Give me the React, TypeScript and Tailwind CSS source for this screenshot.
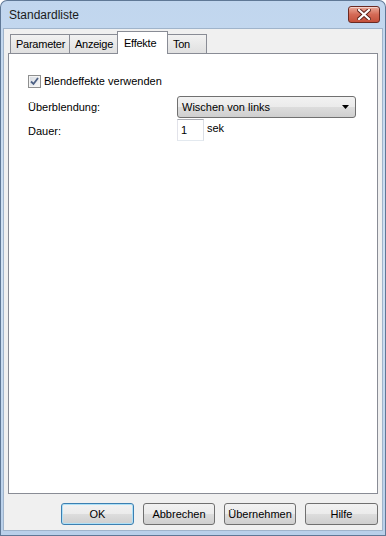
import React from "react";

const tabs = [
  { label: "Parameter", w: "w-[60px]" },
  { label: "Anzeige", w: "w-[49px]" },
  { label: "Effekte", w: "w-[51px]", active: true },
  { label: "Ton", w: "w-[40px]" },
];
const buttons = [
  { label: "OK", primary: true, w: "w-[73px]" },
  { label: "Abbrechen", w: "w-[72px]" },
  { label: "Übernehmen", w: "w-[72px]" },
  { label: "Hilfe", w: "w-[73px]" },
];

function CloseButton() {
  return (
    <div className="w-[32px] h-[17px] rounded-[3px] border border-[#6b2a22] bg-gradient-to-b from-[#e9a999] via-[#d46a56] to-[#c4503b] flex items-center justify-center shadow-[inset_0_1px_0_rgba(255,255,255,0.5)]">
      <svg width="14" height="11" viewBox="0 0 14 11">
        <path d="M2 1 L12 10 M12 1 L2 10" stroke="#5a1f18" strokeWidth="4" strokeLinecap="square" />
        <path d="M2 1 L12 10 M12 1 L2 10" stroke="#ffffff" strokeWidth="2.2" strokeLinecap="square" />
      </svg>
    </div>
  );
}

function Checkbox() {
  return (
    <div className="w-[13px] h-[13px] border border-[#8e8f8f] bg-[#f4f4f4] p-px">
      <div className="w-full h-full bg-gradient-to-br from-[#d9dde3] to-[#f6f6f6] flex items-center justify-center">
        <svg width="9" height="9" viewBox="0 0 9 9">
          <path d="M1 4.5 L3.5 7 L8 1" stroke="#4d6185" strokeWidth="1.8" fill="none" />
        </svg>
      </div>
    </div>
  );
}

export default function App() {
  return (
    <div className="w-[386px] h-[536px] rounded-t-[7px] bg-[#5f7896] p-px font-['Liberation_Sans',Arial,sans-serif] text-[11px] text-black">
      <div className="h-full rounded-t-[6px] bg-gradient-to-b from-[#c1d6ee] via-[#d0e1f3] to-[#b9d0ea] flex flex-col px-[2px] pb-[4px]">
        {/* Title bar */}
        <div className="h-[27px] flex items-center justify-between pl-[6px] pr-[3px]">
          <span className="text-[12px] text-[#1b1b1b]">Standardliste</span>
          <CloseButton />
        </div>

        {/* Client area */}
        <div className="flex-1 bg-[#f0f0f0] border border-[#a0b4cb] flex flex-col px-[4px] pb-[5px]">
          {/* Tabs */}
          <div className="flex items-end h-[24px] pl-[2px] tracking-[-0.25px]">
            {tabs.map((t) =>
              t.active ? (
                <div
                  key={t.label}
                  className={`${t.w} relative z-10 -mb-px h-[23px] pl-[6px] bg-white border border-b-0 border-[#898c95] flex items-start pt-[3px] -ml-px`}
                >
                  {t.label}
                </div>
              ) : (
                <div
                  key={t.label}
                  className={`${t.w} h-[19px] pl-[5px] bg-gradient-to-b from-[#f2f2f2] to-[#e0e0e0] border border-b-0 border-[#898c95] flex items-center -ml-px first:ml-0`}
                >
                  {t.label}
                </div>
              )
            )}
          </div>

          {/* Panel */}
          <div className="flex-1 bg-white border border-[#898c95] pl-[19px] pt-[21px]">
            <div className="flex items-center gap-[3px] h-[13px]">
              <Checkbox />
              <span>Blendeffekte verwenden</span>
            </div>

            <div className="flex mt-[8px]">
              <div className="w-[149px] pt-[3px]">Überblendung:</div>
              <div className="w-[179px] h-[22px] rounded-[3px] border border-[#707070] bg-[linear-gradient(#f2f2f2_0%,#ebebeb_50%,#dddddd_50%,#cfcfcf_100%)] flex items-center justify-between pl-[4px] pr-[6px]">
                <span>Wischen von links</span>
                <svg width="7" height="4" viewBox="0 0 7 4">
                  <path d="M0 0 H7 L3.5 4 Z" fill="#000" />
                </svg>
              </div>
            </div>

            <div className="flex mt-[1px]">
              <div className="w-[149px] pt-[4px]">Dauer:</div>
              <div className="w-[27px] h-[22px] border border-[#abadb3] border-l-[#e2e3ea] border-r-[#dbdfe6] border-b-[#e3e9ef] bg-white pl-[3px] pt-[5px] leading-none">
                1
              </div>
              <span className="ml-[3px] pt-[1px]">sek</span>
            </div>
          </div>

          {/* Buttons */}
          <div className="flex justify-end gap-[9px] mt-[9px]">
            {buttons.map((b) => (
              <div
                key={b.label}
                className={`${b.w} h-[22px] rounded-[3px] border ${
                  b.primary ? "border-[#3c7fb1] shadow-[inset_0_0_0_1px_#aee0f7]" : "border-[#707070]"
                } bg-[linear-gradient(#f2f2f2_0%,#ebebeb_50%,#dddddd_50%,#cfcfcf_100%)] flex items-center justify-center`}
              >
                {b.label}
              </div>
            ))}
          </div>
        </div>
      </div>
    </div>
  );
}
